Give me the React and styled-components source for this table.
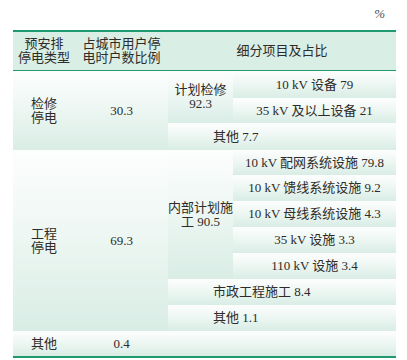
import React from "react";
import styled, { createGlobalStyle } from "styled-components";

const GlobalStyle = createGlobalStyle`
  body {
    margin: 0;
    background: #ffffff;
  }
`;

const green = "#1f9a6e";

const Page = styled.div`
  width: 407px;
  height: 360px;
  box-sizing: border-box;
  padding: 0 11px 0 13px;
  font-family: "Liberation Serif", "Noto Sans CJK SC", serif;
  color: #2e2b28;
`;

const Unit = styled.div`
  height: 30px;
  box-sizing: border-box;
  padding: 7px 11px 0 0;
  text-align: right;
  font-size: 13px;
  line-height: 14px;
  font-style: italic;
  color: #4a4f58;
`;

const Table = styled.table`
  width: 383px;
  table-layout: fixed;
  border-collapse: separate;
  border-spacing: 0;
  border-top: 2px solid ${green};
  border-bottom: 2px solid ${green};
  font-size: 13px;
  line-height: 14px;
`;

const HeadCell = styled.th`
  height: 38px;
  padding: 0;
  font-weight: 400;
  text-align: center;
  vertical-align: middle;
  background: #d9eee5;
  border-bottom: 1px solid ${green};
`;

const Row = styled.tr`
  height: ${(p) => p.$h}px;
`;

const Cell = styled.td`
  padding: 0 0 0 ${(p) => (p.$left ? 45 : 0)}px;
  text-align: ${(p) => (p.$left ? "left" : "center")};
  vertical-align: middle;
  white-space: nowrap;
  background: linear-gradient(to bottom, #fdfefe 0%, #eef7f3 45%, #d9ede5 100%);
`;

const rows = [
  { h: 27, text: "10 kV 设备 79" },
  { h: 25, text: "35 kV 及以上设备 21" },
];

const innerRows = [
  { h: 25, text: "10 kV 配网系统设施 79.8" },
  { h: 26, text: "10 kV 馈线系统设施 9.2" },
  { h: 26, text: "10 kV 母线系统设施 4.3" },
  { h: 26, text: "35 kV 设施 3.3" },
  { h: 26, text: "110 kV 设施 3.4" },
];

export default function App() {
  return (
    <Page>
      <GlobalStyle />
      <Unit>%</Unit>
      <Table>
        <colgroup>
          <col style={{ width: 62 }} />
          <col style={{ width: 93 }} />
          <col style={{ width: 65 }} />
          <col style={{ width: 163 }} />
        </colgroup>
        <thead>
          <tr>
            <HeadCell>
              预安排
              <br />
              停电类型
            </HeadCell>
            <HeadCell>
              占城市用户停
              <br />
              电时户数比例
            </HeadCell>
            <HeadCell colSpan={2}>细分项目及占比</HeadCell>
          </tr>
        </thead>
        <tbody>
          <Row $h={rows[0].h}>
            <Cell rowSpan={3}>
              检修
              <br />
              停电
            </Cell>
            <Cell rowSpan={3}>30.3</Cell>
            <Cell rowSpan={2}>
              计划检修
              <br />
              92.3
            </Cell>
            <Cell>{rows[0].text}</Cell>
          </Row>
          <Row $h={rows[1].h}>
            <Cell>{rows[1].text}</Cell>
          </Row>
          <Row $h={27}>
            <Cell colSpan={2} $left>
              其他 7.7
            </Cell>
          </Row>
          {innerRows.map((r, i) => (
            <Row $h={r.h} key={r.text}>
              {i === 0 && (
                <>
                  <Cell rowSpan={7}>
                    工程
                    <br />
                    停电
                  </Cell>
                  <Cell rowSpan={7}>69.3</Cell>
                  <Cell rowSpan={5}>
                    内部计划施
                    <br />
                    工 90.5
                  </Cell>
                </>
              )}
              <Cell>{r.text}</Cell>
            </Row>
          ))}
          <Row $h={26}>
            <Cell colSpan={2} $left>
              市政工程施工 8.4
            </Cell>
          </Row>
          <Row $h={26}>
            <Cell colSpan={2} $left>
              其他 1.1
            </Cell>
          </Row>
          <Row $h={25}>
            <Cell>其他</Cell>
            <Cell>0.4</Cell>
            <Cell colSpan={2} />
          </Row>
        </tbody>
      </Table>
    </Page>
  );
}
